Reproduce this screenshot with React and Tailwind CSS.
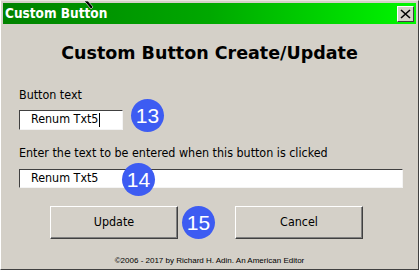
import React from "react";

const tahoma = { fontFamily: '"DejaVu Sans Condensed", "DejaVu Sans", sans-serif' };

function Badge({ n }) {
  return (
    <div className="w-[33px] h-[33px] rounded-full bg-[#3d5cf2] text-white flex items-center justify-center text-[21px] leading-none" style={{ fontFamily: '"Liberation Sans", Arial, sans-serif' }}>
      {n}
    </div>
  );
}

function WinButton({ children }) {
  return (
    <button className="w-[128px] h-[33px] bg-[#d4d0c8] border border-t-white border-l-white border-r-[#404040] border-b-[#404040] shadow-[inset_-1px_-1px_0_#808080] text-[12.4px] text-black">
      {children}
    </button>
  );
}

export default function App() {
  return (
    <div className="w-[419px] h-[270px] bg-[#d4d0c8] border border-t-[#e8e6e0] border-l-[#ffffff] border-r-[#404040] border-b-[#404040] p-[2px] relative overflow-hidden" style={tahoma}>
      {/* title bar */}
      <div className="h-[21px] flex items-center justify-between pl-[2px] pr-[2px] bg-gradient-to-r from-[#008200] via-[#00a800] to-[#00f800]">
        <span className="text-white font-bold text-[13.5px] leading-none">Custom Button</span>
        <div className="w-[17px] h-[16px] bg-[#d4d0c8] border border-t-white border-l-white border-r-[#404040] border-b-[#404040] flex items-center justify-center">
          <svg width="11" height="10" viewBox="0 0 11 10">
            <path d="M1 1 L10 9 M10 1 L1 9" stroke="#000" strokeWidth="1.6" />
          </svg>
        </div>
      </div>

      {/* cursor tail */}
      <svg className="absolute left-[81px] top-0" width="14" height="10" viewBox="0 0 14 10">
        <path d="M2 0 L6 0 L11 6 L9 8 L4 2 Z" fill="#000" stroke="#fff" strokeWidth="0.6" />
      </svg>

      <div className="text-center font-bold text-[17.5px] leading-[22px] mt-[18px] text-black" style={{ fontFamily: '"DejaVu Sans", Verdana, sans-serif' }}>
        Custom Button Create/Update
      </div>

      <div className="pl-[16px] mt-[24px] text-[12.4px] leading-[14px] text-black">Button text</div>

      <div className="flex items-center pl-[16px] mt-[5px]">
        <div className="w-[104px] h-[20px] bg-white border border-t-[#404040] border-l-[#404040] border-r-[#f4f4f4] border-b-[#f4f4f4] flex items-center pl-[11px] text-[12.4px]">
          <span>Renum Txt5</span>
          <span className="w-px h-[14px] bg-black ml-px" />
        </div>
        <div className="ml-[8px] -mt-[8px]">
          <Badge n="13" />
        </div>
      </div>

      <div className="pl-[16px] mt-[14px] text-[12.4px] leading-[14px] text-black">
        Enter the text to be entered when this button is clicked
      </div>

      <div className="relative pl-[16px] mt-[9px]">
        <div className="w-[384px] h-[19px] bg-white border border-t-[#404040] border-l-[#404040] border-r-[#f4f4f4] border-b-[#f4f4f4] flex items-center pl-[11px] text-[12.4px]">
          Renum Txt5
        </div>
        <div className="absolute left-[119px] -top-[6px]">
          <Badge n="14" />
        </div>
      </div>

      <div className="flex items-center mt-[17px] pl-[47px]">
        <WinButton>Update</WinButton>
        <div className="ml-[4px] mt-[1px]">
          <Badge n="15" />
        </div>
        <div className="ml-[20px]">
          <WinButton>Cancel</WinButton>
        </div>
      </div>

      <div className="text-center text-[8px] leading-none mt-[18px] text-black" style={{ fontFamily: '"Liberation Sans", Arial, sans-serif' }}>
        ©2006 - 2017 by Richard H. Adin. An American Editor
      </div>
    </div>
  );
}
